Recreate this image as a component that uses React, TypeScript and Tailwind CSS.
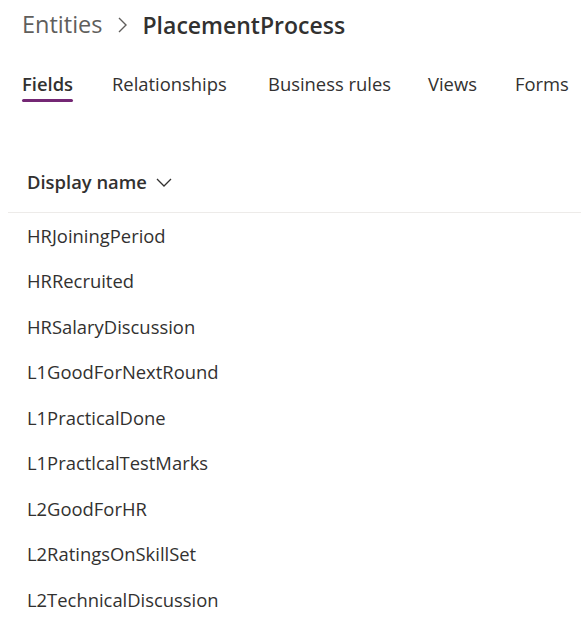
import React from "react";

const rows = [
  "HRJoiningPeriod",
  "HRRecruited",
  "HRSalaryDiscussion",
  "L1GoodForNextRound",
  "L1PracticalDone",
  "L1PractlcalTestMarks",
  "L2GoodForHR",
  "L2RatingsOnSkillSet",
  "L2TechnicalDiscussion",
];

export default function App() {
  return (
    <div
      className="w-[581px] h-[622px] bg-white overflow-hidden text-[#323130] whitespace-nowrap"
      style={{ fontFamily: '"Open Sans", "Noto Sans", sans-serif' }}
    >
      <div className="flex items-center pl-[22px] pt-[12px] h-[38px]">
        <span className="text-[23.5px] text-[#605e5c] leading-none">Entities</span>
        <svg width="14" height="18" viewBox="0 0 14 18" className="ml-[14px] mr-[12px]">
          <path d="M3 2 L10 9 L3 16" fill="none" stroke="#605e5c" strokeWidth="1.4" />
        </svg>
        <span className="text-[23px] font-semibold leading-none">PlacementProcess</span>
      </div>
      <div className="flex pl-[22px] mt-[37px] text-[18.4px] leading-none h-[36px]">
        <div className="w-[90px] flex">
          <div className="flex flex-col">
            <span className="font-semibold">Fields</span>
            <div className="mt-[6px] h-[3px] bg-[#742774] rounded-sm" />
          </div>
        </div>
        <span className="w-[156px]">Relationships</span>
        <span className="w-[160px]">Business rules</span>
        <span className="w-[87px]">Views</span>
        <span>Forms</span>
      </div>
      <div className="ml-[8px] mt-[48px] border-b border-[#edebe9] h-[54px] flex items-center pl-[19px] pb-[8px]">
        <span className="text-[18.4px] font-semibold">Display name</span>
        <svg width="18" height="12" viewBox="0 0 18 12" className="ml-[8px]">
          <path d="M2 3 L9 10 L16 3" fill="none" stroke="#323130" strokeWidth="1.3" />
        </svg>
      </div>
      <div className="flex flex-col ml-[27px]">
        {rows.map((r) => (
          <div key={r} className="h-[45.5px] flex items-center text-[18.4px]">
            {r}
          </div>
        ))}
      </div>
    </div>
  );
}
